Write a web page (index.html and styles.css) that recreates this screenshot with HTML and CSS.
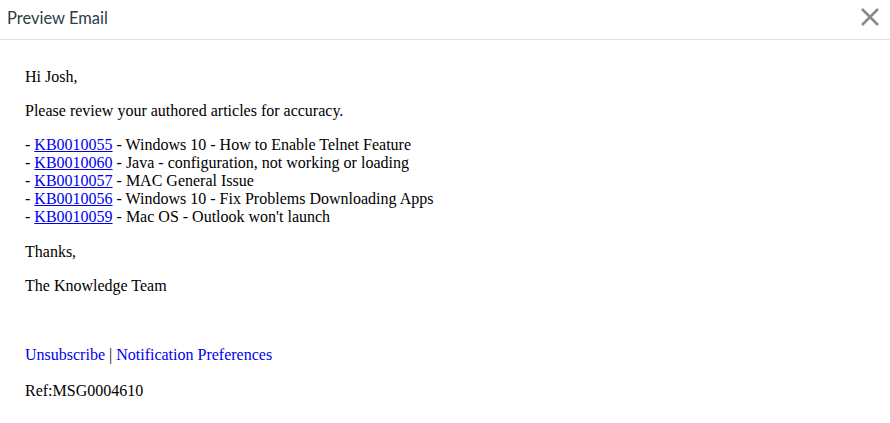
FILE: index.html
```html
<!DOCTYPE html>
<html>
<head>
<meta charset="utf-8">
<link rel="stylesheet" href="styles.css">
</head>
<body>
<div class="modal">
  <div class="modal-header">
    <h1 class="modal-title">Preview Email</h1>
    <button class="close-btn" aria-label="Close">
      <svg width="20" height="20" viewBox="0 0 20 20"><path d="M2 2 L18 18 M18 2 L2 18" stroke="#8a8a8a" stroke-width="2.6" stroke-linecap="butt"/></svg>
    </button>
  </div>
  <div class="email-body">
    <p>Hi Josh,</p>
    <p>Please review your authored articles for accuracy.</p>
    <p class="articles">- <a href="#">KB0010055</a> - Windows 10 - How to Enable Telnet Feature<br>
    - <a href="#">KB0010060</a> - Java - configuration, not working or loading<br>
    - <a href="#">KB0010057</a> - MAC General Issue<br>
    - <a href="#">KB0010056</a> - Windows 10 - Fix Problems Downloading Apps<br>
    - <a href="#">KB0010059</a> - Mac OS - Outlook won't launch</p>
    <p>Thanks,</p>
    <p>The Knowledge Team</p>
    <p class="footer-links"><a href="#" class="plain">Unsubscribe</a> | <a href="#" class="plain">Notification Preferences</a></p>
    <p>Ref:MSG0004610</p>
  </div>
</div>
</body>
</html>
```
FILE: styles.css
```css
html, body {
  margin: 0;
  padding: 0;
  background: #ffffff;
}
.modal {
  width: 890px;
}
.modal-header {
  height: 39px;
  border-bottom: 1px solid #e2e2e2;
  display: flex;
  align-items: center;
  justify-content: space-between;
  padding: 0 10px 0 7px;
  box-sizing: content-box;
}
.modal-title {
  margin: 0;
  font-family: Lato, "Open Sans", sans-serif;
  font-weight: 400;
  font-size: 16.5px;
  color: #2f3b45;
  position: relative;
  top: -2px;
}
.close-btn {
  border: 0;
  background: none;
  padding: 0;
  width: 20px;
  height: 20px;
  display: flex;
  position: relative;
  top: -3px;
}
.email-body {
  padding: 28px 25px 24px;
  font-family: "Liberation Serif", "Times New Roman", serif;
  font-size: 16px;
  line-height: 18px;
  color: #000;
}
.email-body p {
  margin: 0 0 16px 0;
}
.email-body p.articles {
  margin-bottom: 17px;
}
.email-body a {
  color: #0000ee;
  text-decoration: underline;
}
.email-body a.plain {
  text-decoration: none;
}
.email-body p.footer-links {
  padding-top: 35px;
  margin-bottom: 18px;
}
```
